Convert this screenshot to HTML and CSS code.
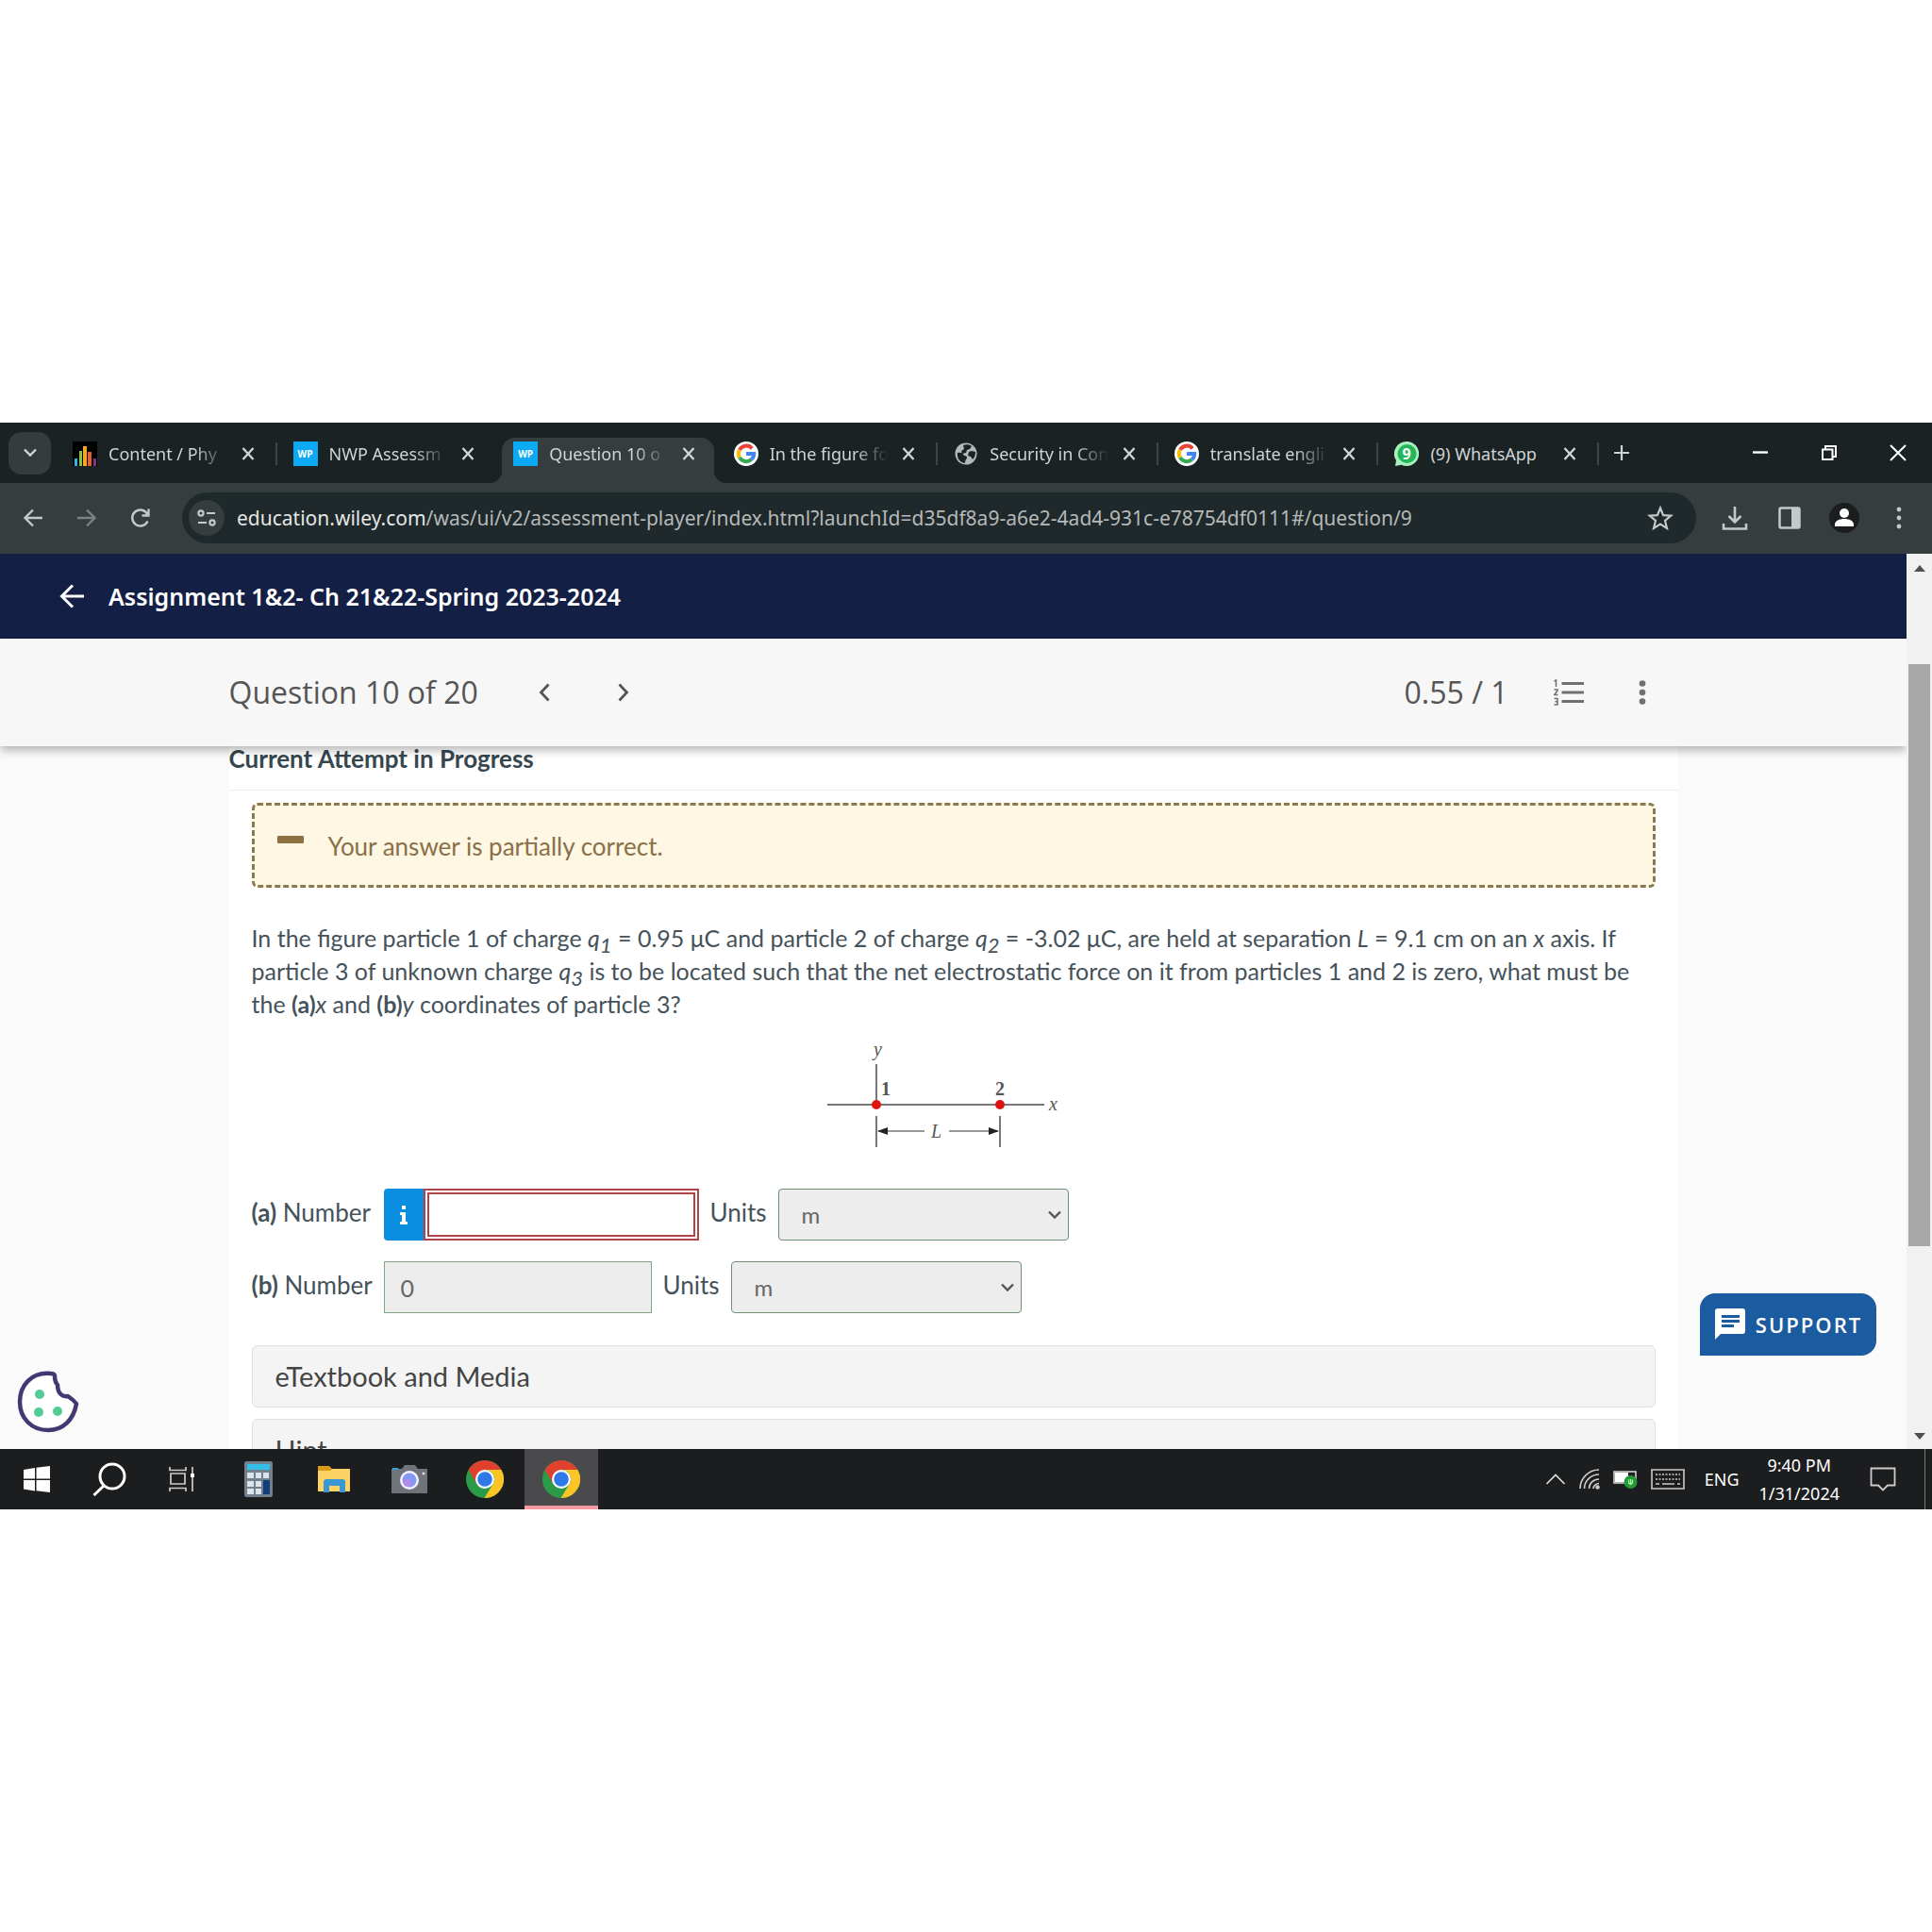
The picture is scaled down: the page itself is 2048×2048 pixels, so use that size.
FILE: index.html
```
<!DOCTYPE html>
<html lang="en">
<head>
<meta charset="utf-8">
<meta name="viewport" content="width=device-width, initial-scale=1">
<title>Question 10 of 20</title>
<link rel="stylesheet" href="styles.css">
</head>
<body>
<svg class="defs" aria-hidden="true">
  <defs>
    <symbol id="x" viewBox="0 0 14 14"><path d="M1.500 1l11 12M12.500 1l-11 12" fill="none" stroke="currentColor" stroke-width="2.400"/></symbol>
    <symbol id="google" viewBox="0 0 26 26">
      <circle cx="13" cy="13" r="13" fill="#fff"/>
      <g fill="none" stroke-width="4">
        <path d="M19.200 7.300A8.200 8.200 0 0 0 5.900 8.900" stroke="#ea4335"/>
        <path d="M5.900 8.900a8.200 8.200 0 0 0 0 8.200" stroke="#fbbc05"/>
        <path d="M5.900 17.100a8.200 8.200 0 0 0 12.500 2" stroke="#34a853"/>
        <path d="M18.400 19.100A8.200 8.200 0 0 0 21.200 13H13" stroke="#4285f4"/>
      </g>
    </symbol>
    <symbol id="chrome" viewBox="0 0 40 40">
      <circle cx="20" cy="20" r="20" fill="#2b9b48"/>
      <path d="M2.700 10A20 20 0 0 1 37.300 10H20L11.300 25z" fill="#e0412f"/>
      <path d="M37.300 10A20 20 0 0 1 19.500 40L28.700 25A10 10 0 0 0 20 10z" fill="#fbc525"/>
      <circle cx="20" cy="20" r="10" fill="#fff"/>
      <circle cx="20" cy="20" r="7.800" fill="#2f78e8"/>
    </symbol>
    <symbol id="chevron" viewBox="0 0 16 12"><path d="M2 2.500l6 6 6-6" fill="none" stroke="currentColor" stroke-width="2.400"/></symbol>
  </defs>
</svg>
<div class="screen">
  <div class="tabstrip">
    <button class="tab-search" aria-label="Search tabs"><svg width="16" height="12"><use href="#chevron"/></svg></button>
    <div class="tabs">
      <div class="tab">
        <svg class="favicon" viewBox="0 0 26 26"><path fill="#000" d="M0 0h26v26H0z"/><path fill="#29b6e8" d="M2 18h3v8H2z"/><path fill="#8ac43f" d="M7 10h3v16H7z"/><path fill="#f6a623" d="M11 5h4v21h-4z"/><path fill="#ee5a2f" d="M16 11h4v15h-4z"/><path fill="#8c2d8c" d="M22 18h3v8h-3z"/></svg>
        <span class="tab-title">Content / Phy</span>
        <button class="tab-close" aria-label="Close tab"><svg width="14" height="14"><use href="#x"/></svg></button>
      </div>
      <div class="tab no-sep">
        <span class="favicon wp">WP</span>
        <span class="tab-title">NWP Assessm</span>
        <button class="tab-close" aria-label="Close tab"><svg width="14" height="14"><use href="#x"/></svg></button>
      </div>
      <div class="tab active no-sep">
        <span class="favicon wp">WP</span>
        <span class="tab-title">Question 10 o</span>
        <button class="tab-close" aria-label="Close tab"><svg width="14" height="14"><use href="#x"/></svg></button>
      </div>
      <div class="tab">
        <svg class="favicon"><use href="#google"/></svg>
        <span class="tab-title">In the figure fo</span>
        <button class="tab-close" aria-label="Close tab"><svg width="14" height="14"><use href="#x"/></svg></button>
      </div>
      <div class="tab">
        <svg class="favicon" viewBox="0 0 26 26"><circle cx="13" cy="13" r="11.500" fill="#b4b9bb"/><path fill="#1a2224" d="M4 12c3-1 6 0 7 3 3 0 4 2 2 4-1 2-1 3-1 4C7 23 3 18 4 12zM10 4c3-1 7-1 9 1l-2 3-3 1-1 3-4 1-1-3 3-2zM19 10l4 1c0 4-1 6-3 8l-2-3-3-1 1-4z"/></svg>
        <span class="tab-title">Security in Con</span>
        <button class="tab-close" aria-label="Close tab"><svg width="14" height="14"><use href="#x"/></svg></button>
      </div>
      <div class="tab">
        <svg class="favicon"><use href="#google"/></svg>
        <span class="tab-title">translate engli</span>
        <button class="tab-close" aria-label="Close tab"><svg width="14" height="14"><use href="#x"/></svg></button>
      </div>
      <div class="tab">
        <svg class="favicon" viewBox="0 0 26 26"><path d="M13 0a13 13 0 1 1-5.500 24.700L1 26l1-6A13 13 0 0 1 13 0z" fill="#a9efc0"/><circle cx="13.500" cy="13" r="10" fill="#22b858"/><text x="13" y="19" text-anchor="middle" class="badge-digit">9</text></svg>
        <span class="tab-title whole">(9) WhatsApp</span>
        <button class="tab-close" aria-label="Close tab"><svg width="14" height="14"><use href="#x"/></svg></button>
      </div>
    </div>
    <button class="new-tab" aria-label="New tab"><svg width="18" height="18" viewBox="0 0 18 18"><path d="M9 1v16M1 9h16" stroke="currentColor" stroke-width="2.200"/></svg></button>
    <div class="window-buttons">
      <button aria-label="Minimize"><svg width="18" height="18" viewBox="0 0 18 18"><path d="M1 8.500h16" stroke="currentColor" stroke-width="2.400"/></svg></button>
      <button aria-label="Restore"><svg width="18" height="18" viewBox="0 0 18 18" fill="none" stroke="currentColor" stroke-width="2"><path d="M2 5.500h10.500V16H2zM5 5V2h11v11h-3"/></svg></button>
      <button aria-label="Close"><svg width="18" height="18" viewBox="0 0 18 18"><path d="M1 1l16 16M17 1L1 17" stroke="currentColor" stroke-width="2"/></svg></button>
    </div>
  </div>

  <div class="toolbar">
    <button aria-label="Back"><svg width="22" height="20" viewBox="0 0 22 20" fill="none" stroke="currentColor" stroke-width="2.400"><path d="M21 10H3M11 1.500L2.500 10l8.500 8.500"/></svg></button>
    <button class="dim" aria-label="Forward"><svg width="22" height="20" viewBox="0 0 22 20" fill="none" stroke="currentColor" stroke-width="2.400"><path d="M1 10h18M11 1.500l8.500 8.500-8.500 8.500"/></svg></button>
    <button aria-label="Reload"><svg width="22" height="22" viewBox="0 0 22 22" fill="none" stroke="currentColor" stroke-width="2.400"><path d="M18.500 14.500A8.500 8.500 0 1 1 18.500 7.500M19.500 1.500v7h-7"/></svg></button>
    <div class="omnibox">
      <button class="site-info" aria-label="Site information"><svg width="22" height="20" viewBox="0 0 22 20" fill="none" stroke="currentColor" stroke-width="2.200"><circle cx="5" cy="5" r="2.600"/><path d="M11 5h9M2 15h9"/><circle cx="17" cy="15" r="2.600"/></svg></button>
      <span class="url"><span class="host">education.wiley.com</span>/was/ui/v2/assessment-player/index.html?launchId=d35df8a9-a6e2-4ad4-931c-e78754df0111#/question/9</span>
      <button class="star" aria-label="Bookmark"><svg width="28" height="26" viewBox="0 0 28 26"><path d="M14 2.500l3.100 7.600 8.200.6-6.300 5.300 2 8L14 19.600 7 24l2-8-6.300-5.300 8.200-.6z" fill="none" stroke="currentColor" stroke-width="2.200"/></svg></button>
    </div>
    <div class="toolbar-end">
      <button aria-label="Downloads"><svg width="28" height="28" viewBox="0 0 28 28" fill="none" stroke="currentColor" stroke-width="2.600"><path d="M14 2v16M7.500 12l6.500 6.500 6.500-6.500M2 20v5.500h24V20"/></svg></button>
      <button aria-label="Side panel"><svg width="24" height="24" viewBox="0 0 24 24"><rect x="1.500" y="1.500" width="21" height="21" rx="1.500" fill="none" stroke="currentColor" stroke-width="2.500"/><path fill="currentColor" d="M14 1h9v22h-9z"/></svg></button>
      <button aria-label="Profile"><svg width="32" height="32" viewBox="0 0 32 32"><circle cx="16" cy="16" r="16" fill="#1b1d1e"/><circle cx="16" cy="11" r="5" fill="#fff"/><path d="M6 25v-2c0-4 5-6 10-6s10 2 10 6v2z" fill="#fff"/></svg></button>
      <button aria-label="Menu"><svg width="8" height="24" viewBox="0 0 8 24" fill="currentColor"><circle cx="4" cy="3" r="2.400"/><circle cx="4" cy="12" r="2.400"/><circle cx="4" cy="21" r="2.400"/></svg></button>
    </div>
  </div>

  <div class="viewport">
    <div class="page">
      <header class="course-bar">
        <button aria-label="Back to assignments"><svg width="27" height="26" viewBox="0 0 27 26" fill="none" stroke="#fff" stroke-width="3"><path d="M26 13H3M14 1.500L2.500 13 14 24.500"/></svg></button>
        <h1>Assignment 1&amp;2- Ch 21&amp;22-Spring 2023-2024</h1>
      </header>
      <div class="question-bar">
        <div class="column question-row">
          <h2>Question 10 of 20</h2>
          <button class="prev" aria-label="Previous question"><svg width="12" height="20" viewBox="0 0 12 20"><path d="M10.500 1.500L2.500 10l8 8.500" fill="none" stroke="currentColor" stroke-width="2.800"/></svg></button>
          <button class="next" aria-label="Next question"><svg width="12" height="20" viewBox="0 0 12 20"><path d="M1.500 1.500l8 8.500-8 8.500" fill="none" stroke="currentColor" stroke-width="2.800"/></svg></button>
          <span class="score">0.55 / 1</span>
          <button class="list" aria-label="Question list"><svg width="32" height="28" viewBox="0 0 32 28" fill="none" stroke="currentColor"><path stroke-width="3.200" d="M8.500 4.500H32M8.500 14H32M8.500 23.500H32"/><path stroke-width="1.500" d="M.5 2l2-1v7M.5 11H4v1L.8 16.500H4.500M.5 20.500h3.500v6.500H.5M1.500 23.700H4"/></svg></button>
          <button class="more" aria-label="More options"><svg width="8" height="26" viewBox="0 0 8 26" fill="currentColor"><circle cx="4" cy="3.500" r="3.300"/><circle cx="4" cy="13" r="3.300"/><circle cx="4" cy="22.500" r="3.300"/></svg></button>
        </div>
      </div>
      <main class="column sheet">
        <h3>Current Attempt in Progress</h3>
        <div class="body">
          <div class="alert"><span class="minus"></span><p>Your answer is partially correct.</p></div>
          <p class="prompt">In the figure particle 1 of charge <i>q</i><sub><i>1</i></sub> = 0.95 μC and particle 2 of charge <i>q</i><sub><i>2</i></sub> = -3.02 μC, are held at separation <i>L</i> = 9.1 cm on an <i>x</i> axis. If particle 3 of unknown charge <i>q</i><sub><i>3</i></sub> is to be located such that the net electrostatic force on it from particles 1 and 2 is zero, what must be the <b>(a)</b><i>x</i> and <b>(b)</b><i>y</i> coordinates of particle 3?</p>
          <svg class="figure" width="272" height="118" viewBox="0 -6 272 118" role="img" aria-label="Particles 1 and 2 on the x axis, separated by L">
            <g stroke="#777" stroke-width="2" fill="none"><path d="M2 65h230M54 22v43M54 77v33M185 77v33"/><path stroke-width="1.500" d="M56 93h49M131 93h52"/></g>
            <path d="M55 93l11-4v8zM184 93l-11-4v8z" fill="#222"/>
            <circle cx="54" cy="65" r="5" fill="#e01313"/><circle cx="185" cy="65" r="5" fill="#e01313"/>
            <g class="figure-label"><text x="51" y="13" class="it">y</text><text x="59" y="55">1</text><text x="180" y="55">2</text><text x="237" y="71" class="it">x</text><text x="112" y="100" class="it">L</text></g>
          </svg>
          <div class="answers">
            <div class="answer">
              <label class="number" for="na"><b>(a)</b> Number</label>
              <div class="entry"><button class="info" aria-label="Information"><svg width="10" height="20" viewBox="0 0 10 20" fill="#fff"><path d="M3 0h4v4H3zM1 7h6v10h2v3H1v-3h2v-7H1z"/></svg></button><input class="wrong" id="na" type="text"></div>
              <label for="ua">Units</label>
              <div class="select"><select id="ua"><option>m</option></select><svg width="16" height="12"><use href="#chevron"/></svg></div>
            </div>
            <div class="answer">
              <label class="number" for="nb"><b>(b)</b> Number</label>
              <div class="entry"><input id="nb" type="text" value="0"></div>
              <label for="ub">Units</label>
              <div class="select"><select id="ub"><option>m</option></select><svg width="16" height="12"><use href="#chevron"/></svg></div>
            </div>
          </div>
          <button class="panel">eTextbook and Media</button>
          <button class="panel">Hint</button>
        </div>
      </main>
    </div>
    <div class="scrollbar"><svg width="16" height="8" viewBox="0 0 16 8"><path d="M2 8l6-7 6 7z" fill="#505050"/></svg><div class="thumb"></div><svg width="16" height="8" viewBox="0 0 16 8"><path d="M2 0l6 7 6-7z" fill="#505050"/></svg></div>
    <button class="cookie" aria-label="Cookie settings"><svg width="66" height="66" viewBox="0 0 66 66"><path d="M36 3C15 1 3 16 3 33c0 18 13 30 30 30 16 0 27-11 30-28-3-4-6-6-9-8-7 1-11-4-11-12-3-3-3-7-3-10-1-2-2-2-4-2z" fill="#fff" stroke="#433872" stroke-width="4.500" stroke-linejoin="round"/><g fill="#52cb97"><circle cx="24" cy="25" r="5"/><circle cx="23" cy="44" r="5"/><circle cx="43" cy="43" r="5"/></g></svg></button>
    <button class="support"><svg width="34" height="34" viewBox="0 0 34 34"><path d="M4 0h26a3 3 0 0 1 3 3v21a3 3 0 0 1-3 3H7l-6 6V3a3 3 0 0 1 3-3z" fill="#fff"/><path d="M8 8.500h19M8 13.500h19M8 18.500h13" stroke="#1b5b9f" stroke-width="3"/></svg>SUPPORT</button>
  </div>

  <footer class="taskbar">
    <button aria-label="Start"><svg width="28" height="28" viewBox="0 0 28 28" fill="#fff"><path d="M0 4l12-2v11.500H0zM13.500 1.700L28 0v13.500H13.500zM0 15h12v11.500L0 24.500zM13.500 15H28v13l-14.500-1.700z"/></svg></button>
    <button aria-label="Search"><svg width="36" height="36" viewBox="0 0 36 36" fill="none" stroke="#fff" stroke-width="3"><circle cx="21" cy="15" r="13"/><path d="M12 25L1.500 35"/></svg></button>
    <button aria-label="Task view"><svg width="28" height="28" viewBox="0 0 28 28" fill="none" stroke="#ccc" stroke-width="1.700"><path d="M2 8h15v11H2zM1 1v3.500h17V1M1 27v-3.500h17V27M25 1v26"/><path d="M23 8h4v4h-4z" fill="#fff" stroke="none"/></svg></button>
    <button aria-label="Calculator"><svg width="30" height="38" viewBox="0 0 30 38"><rect width="30" height="38" rx="2" fill="#71808e"/><path fill="#36bfe6" d="M3 3h24v6H3z"/><path fill="#dce3ea" d="M3 12h7v6H3zM12 12h6v6h-6zM20 12h6v6h-6zM3 21h7v6H3zM12 21h6v6h-6zM3 29h7v6H3zM12 29h6v6h-6z"/><path fill="#143e79" d="M20 20h7v15h-7z"/></svg></button>
    <button aria-label="File Explorer"><svg width="36" height="30" viewBox="0 0 36 30"><path d="M1 1h12l3 3h18v10H1z" fill="#dc9a1a"/><path d="M1 6h13l3-2h18v24H1z" fill="#fdd366"/><path d="M7 29V18a3 3 0 0 1 3-3h17a3 3 0 0 1 3 3v11h-6v-7H13v7z" fill="#3b97d3"/></svg></button>
    <button aria-label="Camera"><svg width="40" height="32" viewBox="0 0 40 32"><path d="M1 5h11l3-4h11l3 4h10v26H1z" fill="#6e7479"/><path fill="#2aa9d8" d="M2 4h6v2H2z"/><circle cx="20" cy="17" r="10" fill="#f3f0ff"/><circle cx="20" cy="17" r="7.500" fill="#8398f3"/><circle cx="18" cy="20" r="4" fill="#b68be6"/><circle cx="35" cy="10" r="1.500" fill="#ddd"/></svg></button>
    <button aria-label="Chrome"><svg width="40" height="40"><use href="#chrome"/></svg></button>
    <button class="running" aria-label="Chrome, running"><svg width="40" height="40"><use href="#chrome"/></svg></button>
    <div class="tray">
      <svg width="22" height="14" viewBox="0 0 22 14"><path d="M1.500 12L11 2.500l9.500 9.500" fill="none" stroke="#ddd" stroke-width="1.700"/></svg>
      <svg width="22" height="22" viewBox="0 0 22 22" fill="none" stroke="#ccc" stroke-width="1.600"><path d="M1 21C1 10 10 1 21 1M5.500 21C5.500 12.500 12.500 6 21 6M10.500 21c0-5.500 4.500-10 10.500-10M15 21c0-3 3-5.500 6-5.500"/><circle cx="19.500" cy="19.500" r="1.500" fill="#ccc"/></svg>
      <svg width="26" height="20" viewBox="0 0 26 20"><path d="M1 2h23v12H1z" fill="#222" stroke="#ddd" stroke-width="1.500"/><path fill="#fff" d="M2 3h14v10H2z"/><circle cx="18.500" cy="13" r="7" fill="#249b35"/><path d="M18.500 10v6M16.500 10.500v2.500a2 2 0 0 0 4 0v-2.500" fill="none" stroke="#b6f5b8" stroke-width="1.200"/></svg>
      <svg width="36" height="22" viewBox="0 0 36 22" fill="none" stroke="#ccc" stroke-width="1.600"><path d="M1 1h34v20H1z"/><path stroke-dasharray="2 1.500" d="M5 6h26M5 11h26"/><path d="M5 16h4M12 16h13M28 16h3"/></svg>
      <span class="lang">ENG</span>
      <time class="clock" datetime="2024-01-31T21:40"><span>9:40 PM</span><span>1/31/2024</span></time>
      <svg class="notes" width="28" height="26" viewBox="0 0 28 26"><path d="M1.500 1.500h25v18H19l-5 5-5-5H1.500z" fill="none" stroke="#ccc" stroke-width="1.800"/></svg>
    </div>
  </footer>
</div>
</body>
</html>
```

FILE: styles.css
```
* { box-sizing: border-box; }
body {
  margin: 0;
  height: 100vh;
  padding: 448px 0;
  background: #fff;
  font-family: "Open Sans", sans-serif;
}
h1, h2, h3, p { margin: 0; }
button {
  display: flex;
  align-items: center;
  justify-content: center;
  padding: 0;
  border: 0;
  background: none;
  color: inherit;
  font-family: inherit;
}
svg { display: block; flex: none; }
.defs { position: absolute; width: 0; height: 0; }
.screen { display: flex; flex-direction: column; height: 100%; }

/* tab strip */
.tabstrip {
  display: flex;
  align-items: center;
  flex: none;
  height: 64px;
  padding-left: 9px;
  background: #1a2224;
  color: #d0d4d5;
}
.tab-search { flex: none; width: 45px; height: 45px; margin-right: 11px; border-radius: 14px; background: #343c3e; }
.tabs { display: grid; grid-template-columns: repeat(7, minmax(0, 1fr)); flex: 0 1 1635px; align-self: flex-end; height: 48px; }
.tab {
  position: relative;
  display: flex;
  align-items: center;
  gap: 12px;
  margin-right: 9px;
  padding: 0 20px 14px 12px;
}
.tab::after { content: ""; position: absolute; right: -4px; top: 5px; width: 2px; height: 24px; background: #3c4547; }
.tab.no-sep::after { display: none; }
.tab.active { border-radius: 14px 14px 0 0; background: #353d3f; }
.tab.active::before, .tab.active::after {
  content: "";
  display: block;
  position: absolute;
  top: auto;
  bottom: 0;
  width: 14px;
  height: 14px;
}
.tab.active::before { left: -14px; background: radial-gradient(circle at 0 0, transparent 14px, #353d3f 15px); }
.tab.active::after { right: -14px; background: radial-gradient(circle at 100% 0, transparent 14px, #353d3f 15px); }
.favicon { flex: none; width: 26px; height: 26px; }
.wp { background: #0caaf5; color: #fff; font-size: 10px; font-weight: 700; line-height: 26px; text-align: center; }
.badge-digit { fill: #fff; font-size: 16px; font-weight: 700; }
.tab-title {
  flex: 1;
  overflow: hidden;
  white-space: nowrap;
  font-family: "Noto Sans", sans-serif;
  font-size: 18px;
  line-height: 28px;
  -webkit-mask-image: linear-gradient(90deg, #000 70%, transparent 98%);
  mask-image: linear-gradient(90deg, #000 70%, transparent 98%);
}
.tab-title.whole { -webkit-mask-image: none; mask-image: none; }
.new-tab { flex: none; width: 38px; height: 38px; }
.window-buttons { display: grid; grid-template-columns: repeat(3, 73px); margin-left: auto; color: #fff; }

/* toolbar */
.toolbar {
  display: flex;
  align-items: center;
  flex: none;
  height: 75px;
  padding: 0 6px 2px;
  background: #353d3f;
  color: #c3c8ca;
}
.toolbar > button { flex: none; width: 57px; height: 48px; }
.toolbar > .dim { color: #7b8183; }
.omnibox { display: flex; align-items: center; flex: 1; min-width: 0; height: 54px; margin-left: 16px; padding-left: 7px; border-radius: 27px; background: #1f282a; }
.site-info { flex: none; width: 38px; height: 38px; border-radius: 50%; background: #353d3f; }
.url { flex: 1; overflow: hidden; margin-left: 13px; white-space: nowrap; color: #b5b9b9; font-family: "Noto Sans", sans-serif; font-size: 21px; line-height: 30px; }
.host { color: #e4e6e6; }
.star { width: 76px; height: 40px; }
.toolbar-end { display: grid; grid-template-columns: repeat(4, 58px); margin-left: 12px; justify-items: center; }

/* page */
.viewport { position: relative; display: flex; flex: 1; min-height: 0; overflow: hidden; }
.page { flex: 1; min-width: 0; overflow: hidden; background: #fafafa; }
.course-bar { display: flex; align-items: center; gap: 25px; height: 90px; padding-left: 63px; background: #141f45; color: #fff; }
.course-bar h1 { font-family: "Noto Sans", sans-serif; font-size: 25px; line-height: 34px; font-weight: 600; }
.column { width: 100%; max-width: 1536px; margin: 0 auto; }
.question-bar { position: relative; display: flex; height: 114px; background: #f7f7f7; box-shadow: 0 4px 10px rgba(0, 0, 0, .3); color: #555; }
.question-row { display: flex; align-items: center; }
.question-row h2 { font-size: 32px; line-height: 44px; font-weight: 400; }
.prev, .next { width: 40px; height: 40px; }
.prev { margin-left: 50px; }
.next { margin-left: 44px; }
.score { margin-left: auto; font-size: 32px; line-height: 44px; }
.list { width: 40px; height: 40px; margin-left: 44px; color: #707070; }
.more { width: 40px; height: 40px; margin: 0 18px 0 38px; color: #707070; }
.sheet { min-height: 100%; background: #fff; font-family: Lato, sans-serif; color: #45525a; }
.sheet h3 { padding-bottom: 20px; border-bottom: 1px solid #eee; font-size: 26px; line-height: 26px; color: #37474f; }
.body { padding: 13px 24px; }
.alert { display: flex; align-items: flex-start; gap: 26px; height: 90px; padding: 27px 24px; border: 3px dashed #8a7a50; border-radius: 6px; background: #fdf7e3; color: #8a7048; }
.minus { width: 28px; height: 8px; margin-top: 5px; border-radius: 1px; background: #8f7040; }
.alert p { font-size: 26px; line-height: 32px; }
.prompt { margin-top: 36px; font-size: 25px; line-height: 35px; }
.prompt sub { font-size: 22px; line-height: 0; vertical-align: -6px; }
.figure { margin: 18px auto 0; }
.figure-label { fill: #555; font-family: "Liberation Serif", serif; font-size: 20px; font-weight: 700; }
.it { font-style: italic; font-weight: 400; }
.answers { display: grid; gap: 22px; margin-top: 42px; }
.answer { display: flex; align-items: center; gap: 12px; font-size: 26px; line-height: 30px; }
.answer label { padding-bottom: 6px; white-space: nowrap; }
.answer .number { width: 128px; }
.entry { display: flex; height: 55px; }
.info { width: 42px; border-radius: 4px 0 0 4px; background: #0a8ee0; }
.entry input { width: 284px; border: 1px solid #7fa585; border-radius: 0; padding: 0 17px; background: #ededed; color: #666; font: 25px Lato, sans-serif; outline: 0; }
.entry .wrong { width: 292px; border: 6px double #b04449; background: #fff; }
.select { position: relative; width: 308px; height: 55px; }
.select select { appearance: none; width: 100%; height: 100%; padding: 0 24px; border: 1px solid #6f9276; border-radius: 4px; background: #ededed; color: #666; font: 24px Lato, sans-serif; }
.select svg { position: absolute; right: 7px; top: 22px; color: #555; }
.panel { width: 100%; height: 66px; justify-content: flex-start; margin-top: 12px; padding-left: 24px; border: 1px solid #e0e0e0; border-radius: 6px; background: #f4f4f4; color: #444; font-size: 29px; line-height: 36px; }
.answers + .panel { margin-top: 34px; }

.scrollbar { display: flex; flex-direction: column; align-items: center; flex: none; width: 27px; padding: 11px 0 9px; background: #f1f1f1; }
.thumb { flex: 1; width: 23px; margin: 98px 0 198px; background: #a8a8a8; }
.cookie { position: absolute; left: 18px; bottom: 17px; }
.support { position: absolute; right: 59px; bottom: 99px; gap: 10px; width: 187px; height: 66px; border-radius: 16px 16px 16px 0; background: #1b5b9f; color: #fff; font-size: 22px; font-weight: 600; letter-spacing: 2px; }

/* taskbar */
.taskbar { display: flex; flex: none; height: 64px; background: #1c1d1f; color: #fff; }
.taskbar > button { flex: none; width: 80px; }
.taskbar > button:nth-child(-n+3) { width: 77px; }
.taskbar > button:nth-child(4) { margin-left: 3px; }
.taskbar > .running { width: 78px; margin-left: 2px; border-bottom: 4px solid #f59aa3; padding-top: 4px; background: #4a4a4c; }
.tray { display: flex; align-items: center; margin-left: auto; padding-right: 30px; border-right: 1px solid #777; gap: 14px; margin-right: 7px; font-family: "Noto Sans", sans-serif; font-size: 18px; line-height: 30px; }
.lang { margin: 0 7px; }
.clock { display: grid; justify-items: center; }
.notes { margin-left: 18px; }
```
